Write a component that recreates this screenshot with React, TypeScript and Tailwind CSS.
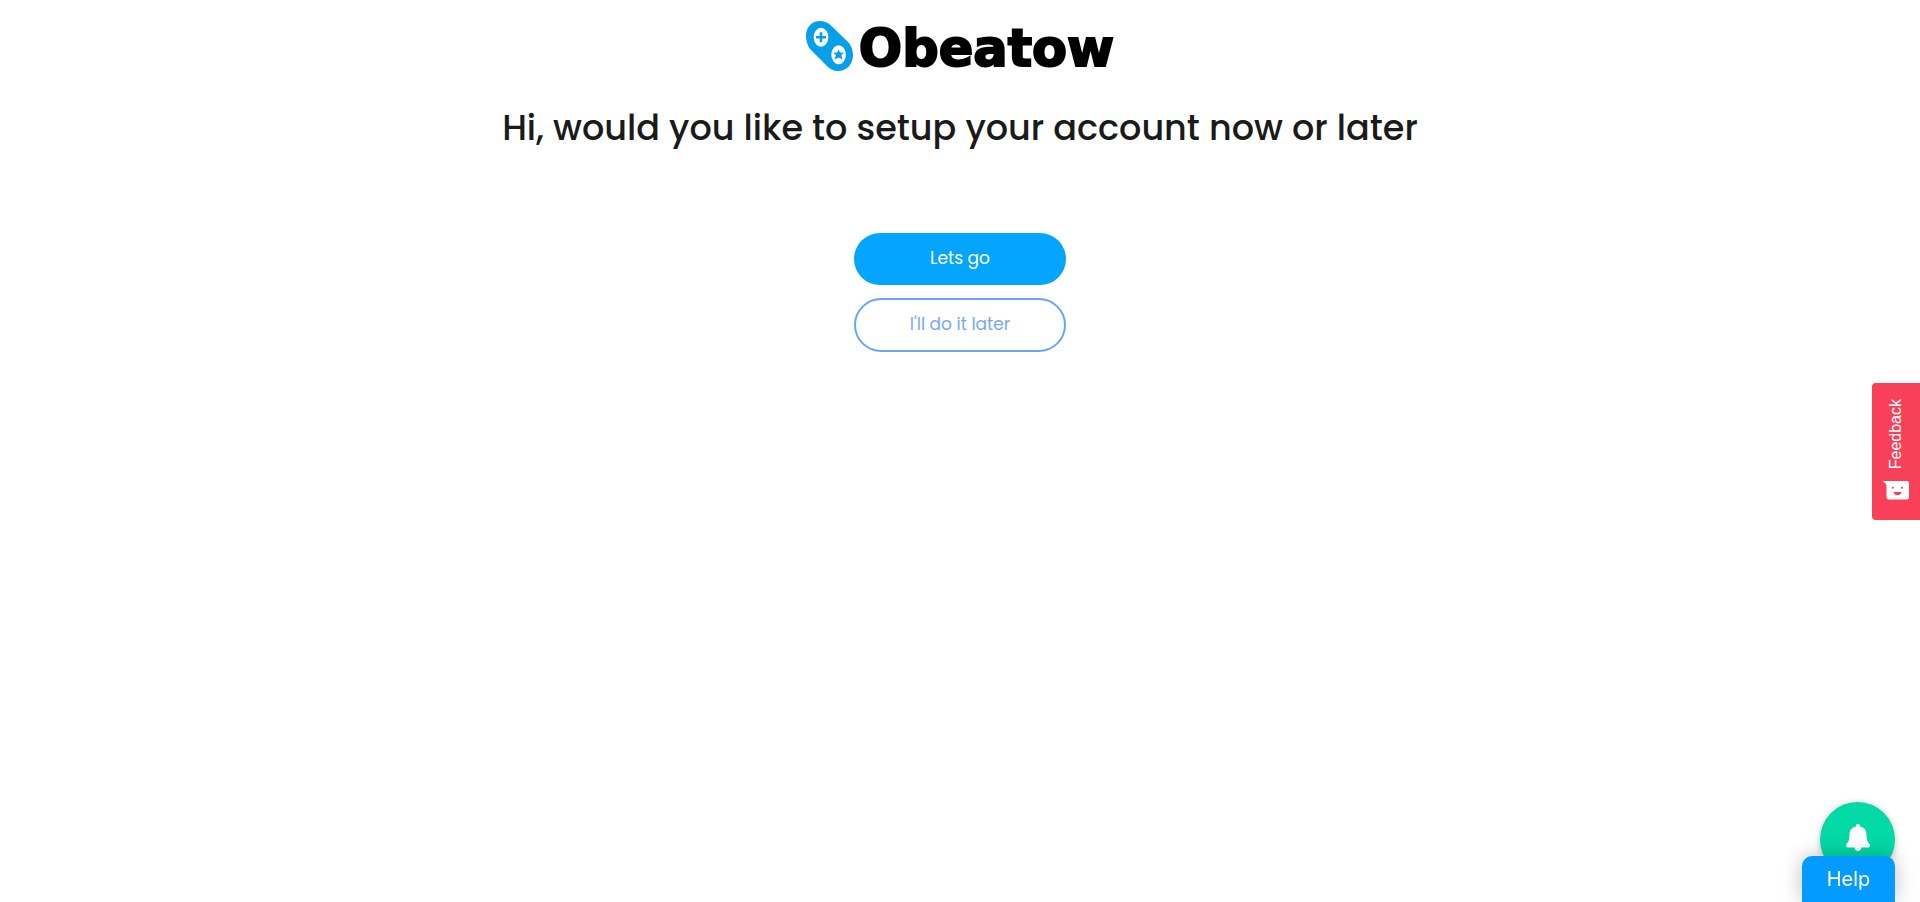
function LogoMark() {
  return (
    <svg width="47" height="50" viewBox="0 0 47 50" aria-hidden="true">
      <path
        d="M0 15C0 6 6 0 14 0C18 0 22 1.500 25 4.500L42 21C45 24 47 29 47 34C47 43 41 50 32 50C28 50 25 48.500 22 46L5 29C2 26 0 20 0 15z"
        fill="#069fe9"
      />
      <ellipse cx="15" cy="16.300" rx="7.300" ry="9.500" fill="#fff" />
      <ellipse cx="32.600" cy="33.700" rx="7.300" ry="9.500" fill="#fff" />
      <path d="M15 11.300v10M10 16.300h10" stroke="#069fe9" strokeWidth="2.600" />
      <path
        d="M32.600 28.500l1.500 3 3.700.2-2.500 2.600 1.300 4.200-4-2-4 2 1.300-4.200-2.500-2.600 3.700-.2z"
        fill="#069fe9"
      />
    </svg>
  );
}

function FaceIcon() {
  return (
    <svg width="26" height="19" viewBox="0 0 26 19" aria-hidden="true">
      <path d="M0 0h23.500Q26 0 26 2.500v13.500q0 2.500-2.500 2.500H6q-2.500 0-2.500-2.500V4.500Q3 2 0 0.800z" fill="#fff" />
      <circle cx="9.800" cy="6.700" r="1" fill="#f84058" />
      <circle cx="19" cy="6.700" r="1" fill="#f84058" />
      <path d="M10.500 11h8q-.8 3.200-4 3.200t-4-3.200z" fill="#f84058" />
    </svg>
  );
}

function BellIcon() {
  return (
    <svg width="24" height="27" viewBox="0 0 24 27" aria-hidden="true">
      <path
        d="M12 0c1.300 0 2 .8 2 2v.6c4.500 1 6.500 4 6.500 7.900 0 4.500.5 6.800 2.500 9 .8.8 1 1.500 1 2 0 1.200-.8 2-1.800 2H15.500C15.200 25.500 14 27 12 27s-3.200-1.500-3.500-3.500H1.800C.8 23.500 0 22.700 0 21.500c0-.5.200-1.200 1-2 2-2.200 2.500-4.500 2.500-9C3.500 6.600 5.500 3.600 10 2.600V2c0-1.200.7-2 2-2z"
        fill="#fff"
      />
    </svg>
  );
}

export default function App() {
  return (
    <div className="min-h-screen bg-white font-['Poppins','Inter',sans-serif] text-[#1a1a1a]">
      <main className="flex flex-col items-center px-4 pt-5">
        <a href="#" className="flex items-start gap-1.5 pt-px">
          <LogoMark />
          <span className="font-['DejaVu_Sans',sans-serif] text-[51px] leading-[55px] font-bold text-black [-webkit-text-stroke:2px_black]">
            Obeatow
          </span>
        </a>
        <h1 className="mt-7 text-center text-[35px] leading-[48px] font-medium">
          Hi, would you like to setup your account now or later
        </h1>
        <div className="mt-[81px] flex flex-col gap-[13px]">
          <button type="button" className="h-[52px] w-[212px] rounded-full bg-[#03a5ff] text-[17px] text-white">
            Lets go
          </button>
          <button
            type="button"
            className="h-[54px] w-[212px] rounded-full border-2 border-[#66a6f8] text-[17px] text-[#79a8fb]"
          >
            I'll do it later
          </button>
        </div>
      </main>

      <button
        type="button"
        className="fixed top-[383px] right-0 flex h-[137px] w-12 flex-col items-center justify-center gap-3 rounded-l bg-[#f84058] pb-1 text-white"
      >
        <span className="rotate-180 font-['Liberation_Sans',sans-serif] text-[16px] leading-5 [writing-mode:vertical-rl]">
          Feedback
        </span>
        <FaceIcon />
      </button>

      <button
        type="button"
        aria-label="Notifications"
        className="fixed right-[25px] bottom-[25px] flex size-[75px] items-center justify-center rounded-full bg-[#03d9a6] pb-1 shadow-[0_1px_6px_rgba(0,0,0,0.25)]"
      >
        <BellIcon />
      </button>
      <button
        type="button"
        className="fixed right-[25px] bottom-0 h-[46px] w-[93px] rounded-t-[10px] bg-[#039bff] font-['Inter',sans-serif] text-[20px] text-white shadow-[0_0_20px_rgba(0,0,0,0.25)]"
      >
        Help
      </button>
    </div>
  );
}
